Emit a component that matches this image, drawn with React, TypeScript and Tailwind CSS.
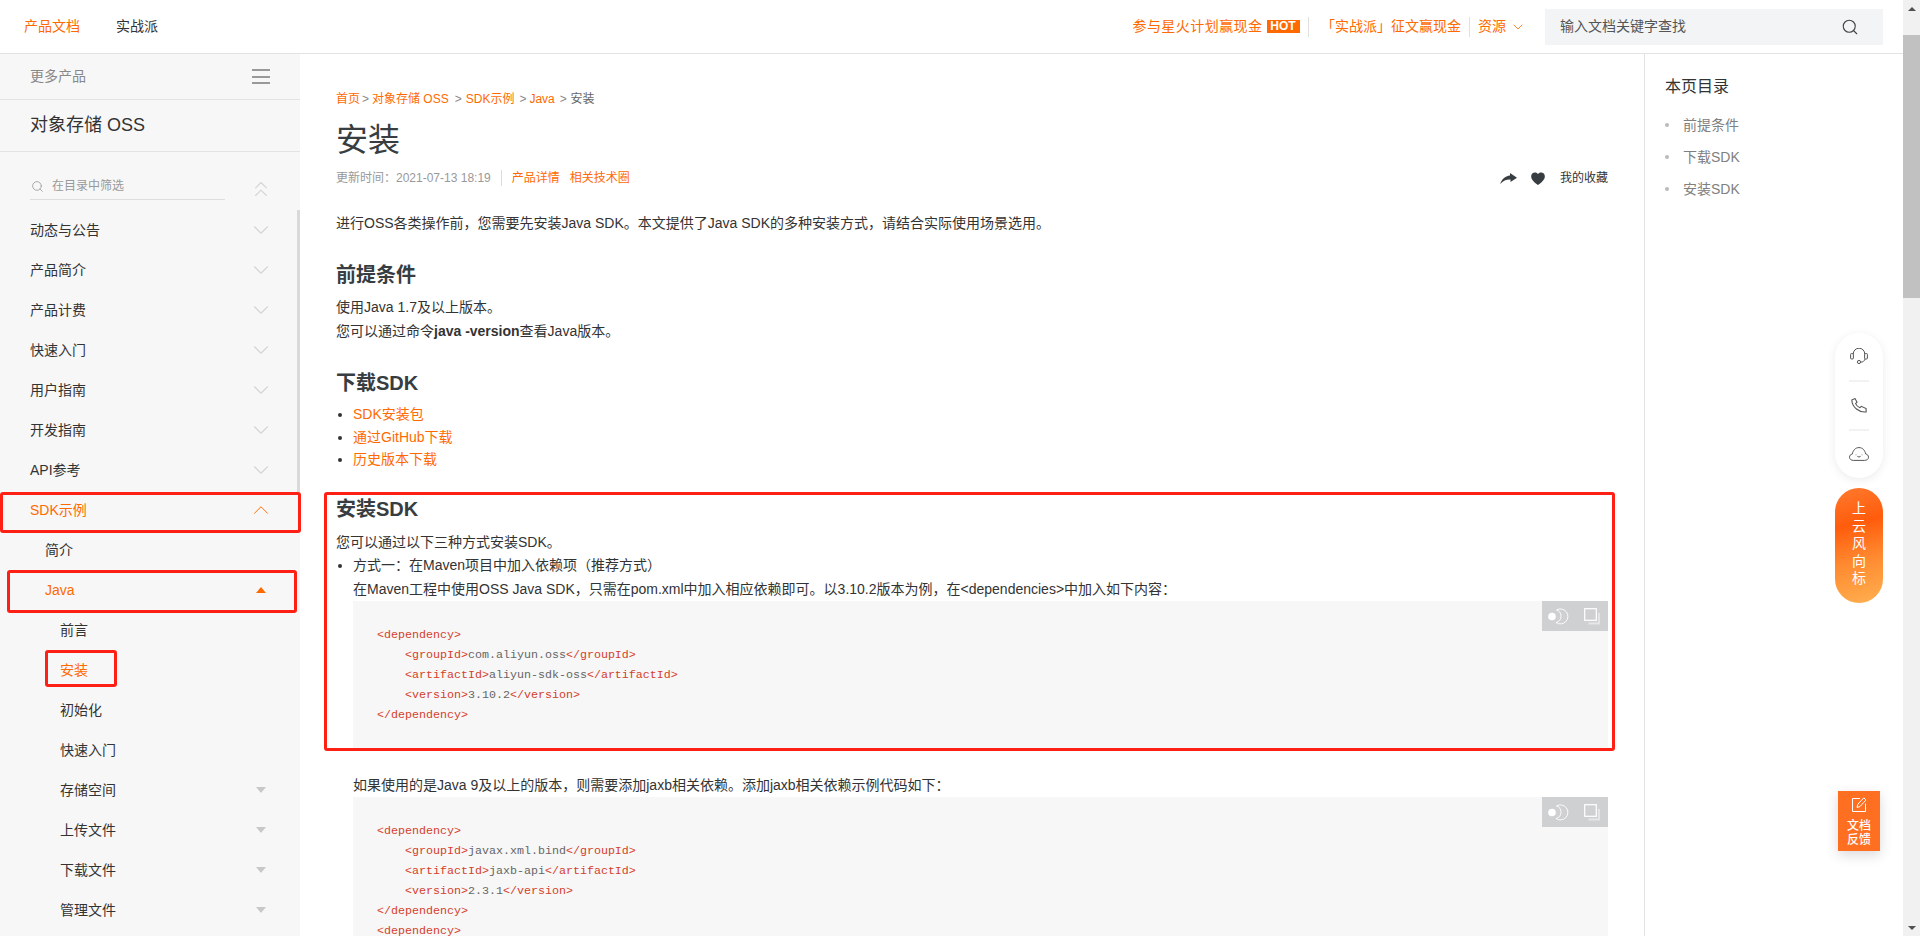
import { ChevronDown, ChevronUp, ChevronsUp, Search } from 'lucide-react';

const sideFont = { fontFamily: '"Liberation Sans", "Noto Sans CJK SC", sans-serif' };

type MenuItem = {
  label: string;
  level: 1 | 2 | 3;
  icon?: 'down' | 'up' | 'caret' | 'caretUp';
  active?: boolean;
};

const menu: MenuItem[] = [
  { label: '动态与公告', level: 1, icon: 'down' },
  { label: '产品简介', level: 1, icon: 'down' },
  { label: '产品计费', level: 1, icon: 'down' },
  { label: '快速入门', level: 1, icon: 'down' },
  { label: '用户指南', level: 1, icon: 'down' },
  { label: '开发指南', level: 1, icon: 'down' },
  { label: 'API参考', level: 1, icon: 'down' },
  { label: 'SDK示例', level: 1, icon: 'up', active: true },
  { label: '简介', level: 2 },
  { label: 'Java', level: 2, icon: 'caretUp', active: true },
  { label: '前言', level: 3 },
  { label: '安装', level: 3, active: true },
  { label: '初始化', level: 3 },
  { label: '快速入门', level: 3 },
  { label: '存储空间', level: 3, icon: 'caret' },
  { label: '上传文件', level: 3, icon: 'caret' },
  { label: '下载文件', level: 3, icon: 'caret' },
  { label: '管理文件', level: 3, icon: 'caret' },
];

function MenuIcon({ icon }: { icon: MenuItem['icon'] }) {
  if (icon === 'down') return <ChevronDown size={26} strokeWidth={1} className="shrink-0 text-[#d4d4d4]" />;
  if (icon === 'up') return <ChevronUp size={26} strokeWidth={0.9} className="shrink-0 text-[#ff6a00]" />;
  if (icon === 'caret') {
    return <div className="w-0 h-0 border-x-[5.5px] border-x-transparent border-t-[6px] border-t-[#c8c8c8]" />;
  }
  if (icon === 'caretUp') {
    return <div className="w-0 h-0 border-x-[5.5px] border-x-transparent border-b-[6px] border-b-[#ff6a00]" />;
  }
  return null;
}

function Sidebar() {
  return (
    <aside className="relative w-[300px] h-full bg-[#f7f7f7] overflow-hidden shrink-0">
      <div className="h-[46px] pl-[30px] pr-[30px] flex items-center justify-between border-b border-[#e3e3e3] text-[14px] text-[#888]">
        <span>更多产品</span>
        <div className="w-[18px] h-[15px] flex flex-col justify-between">
          <div className="h-[2px] bg-[#999]" />
          <div className="h-[2px] bg-[#999]" />
          <div className="h-[2px] bg-[#999]" />
        </div>
      </div>
      <div className="h-[52px] pl-[30px] flex items-center border-b border-[#e3e3e3] text-[18px] text-[#333]">
        对象存储 OSS
      </div>
      <div className="h-[58px] pl-[30px] pt-[19px] flex items-start">
        <div className="w-[195px] h-[29px] pt-[2px] flex items-center gap-2 border-b border-[#dedede] text-[12px] text-[#999]">
          <Search size={13} strokeWidth={1.5} className="ml-[1px] text-[#999]" />
          <span>在目录中筛选</span>
        </div>
        <ChevronsUp size={26} strokeWidth={1} className="ml-[23px] mt-[5px] text-[#d4d4d4]" />
      </div>
      {menu.map((item, i) => (
        <div
          key={i}
          className={`h-10 flex items-center justify-between pr-[30px] text-[14px] ${
            item.level === 1 ? 'pl-[30px]' : item.level === 2 ? 'pl-[45px]' : 'pl-[60px]'
          } ${item.active ? 'text-[#ff6a00]' : 'text-[#333]'}`}
        >
          <span>{item.label}</span>
          <span className="w-[18px] flex justify-center">
            <MenuIcon icon={item.icon} />
          </span>
        </div>
      ))}
      {/* sidebar scrollbar thumb */}
      <div className="absolute right-0 top-[156px] w-[3px] h-[282px] bg-[#d9d9d9]" />
    </aside>
  );
}

function CodeTools() {
  return (
    <div className="absolute right-0 top-0 w-[66px] h-[30px] bg-[#cfd0d2] flex items-center">
      <svg width="22" height="18" viewBox="0 0 22 18" fill="none" className="ml-[5px]">
        <circle cx="5" cy="9.500" r="3.800" fill="#fff" />
        <path d="M9.500 3A7.500 7.500 0 1 1 9 15.500A6.500 6.500 0 0 0 9.500 3Z" stroke="#fff" strokeWidth="0.9" />
      </svg>
      <svg width="17" height="17" viewBox="0 0 17 17" fill="none" className="ml-[15px]">
        <rect x="0.700" y="0.700" width="11.600" height="11.600" stroke="#fff" strokeWidth="1.200" />
        <path d="M15 5v10.500H4.500" stroke="#e6e6e8" strokeWidth="1.800" />
      </svg>
    </div>
  );
}

type CodeLine = { indent?: boolean; open: string; value?: string; close?: string };

function CodeBlock({ lines, cut }: { lines: CodeLine[]; cut?: boolean }) {
  return (
    <div className={`relative bg-[#f7f7f7] pl-6 pt-6 ${cut ? '' : 'pb-6'}`}>
      <CodeTools />
      <div className="text-[11.66px] leading-5 text-[#666] whitespace-pre" style={{ fontFamily: '"Liberation Mono", monospace' }}>
        {lines.map((l, i) => (
          <div key={i} className={l.indent ? 'pl-7' : ''}>
            <span className="text-[#d5402b]">{l.open}</span>
            {l.value}
            {l.close && <span className="text-[#d5402b]">{l.close}</span>}
          </div>
        ))}
      </div>
    </div>
  );
}

function Article() {
  return (
    <main className="relative flex-1 min-w-0 h-full overflow-hidden pl-9 pr-9 text-[#333] text-[14px]">
      <div className="mt-[35px] h-5 flex items-center text-[12px] text-[#ff6a00]">
        <span>首页</span>
        <span className="text-[#888] ml-[2px] mr-[3px]">&gt;</span>
        <span>对象存储 OSS</span>
        <span className="text-[#888] ml-[6px] mr-1">&gt;</span>
        <span>SDK示例</span>
        <span className="text-[#888] ml-[5px] mr-[3px]">&gt;</span>
        <span>Java</span>
        <span className="text-[#888] ml-[5px] mr-[3.6px]">&gt;</span>
        <span className="text-[#666]">安装</span>
      </div>
      <h1 className="mt-[9px] h-11 text-[32px] leading-[44px] text-[#373d41]">安装</h1>
      <div className="relative mt-[6px] h-5 flex items-center text-[12px] text-[#999]">
        <span>更新时间：2021-07-13 18:19</span>
        <div className="w-px h-4 bg-[#dcdcdc] ml-[10px] mr-[10px]" />
        <span className="text-[#ff6a00]">产品详情</span>
        <span className="text-[#ff6a00] ml-[10px]">相关技术圈</span>
        <div className="ml-auto flex items-center text-[#333]">
          <svg width="17" height="11" viewBox="0 0 17 11" fill="#373d41" className="mt-[1px]">
            <path d="M10 0 17 4.700 10.500 9V6.600C6.500 6.300 3.500 7.800.2 11 1.500 6.500 5 2.900 10 2.400Z" />
          </svg>
          <svg width="14" height="13" viewBox="0 0 14 13" fill="#373d41" className="ml-[14px]">
            <path d="M7 13C3 10 .2 7.500.2 4.400A3.800 3.800 0 0 1 4 .4C5.300.4 6.400 1 7 2 7.600 1 8.700.4 10 .4A3.800 3.800 0 0 1 13.800 4.400C13.800 7.500 11 10 7 13Z" />
          </svg>
          <span className="ml-[15px]">我的收藏</span>
        </div>
      </div>
      <p className="mt-[23px] leading-6">进行OSS各类操作前，您需要先安装Java SDK。本文提供了Java SDK的多种安装方式，请结合实际使用场景选用。</p>

      <h2 className="mt-[26px] h-7 text-[20px] leading-7 font-bold text-[#373d41]">前提条件</h2>
      <p className="mt-[6px] leading-6">使用Java 1.7及以上版本。</p>
      <p className="leading-6">您可以通过命令<b>java -version</b>查看Java版本。</p>

      <h2 className="mt-[26px] h-7 text-[20px] leading-7 font-bold text-[#373d41]">下载SDK</h2>
      <ul className="mt-[6px] ml-[17px] list-disc text-[#ff6a00] leading-[22.5px] marker:text-[#333]">
        <li>SDK安装包</li>
        <li>通过GitHub下载</li>
        <li>历史版本下载</li>
      </ul>

      <h2 className="mt-[24.5px] h-7 text-[20px] leading-7 font-bold text-[#373d41]">安装SDK</h2>
      <p className="mt-2 leading-[22px]">您可以通过以下三种方式安装SDK。</p>
      <ul className="ml-[17px] list-disc leading-6 marker:text-[#333]">
        <li>
          方式一：在Maven项目中加入依赖项（推荐方式）
          <p>在Maven工程中使用OSS Java SDK，只需在pom.xml中加入相应依赖即可。以3.10.2版本为例，在&lt;dependencies&gt;中加入如下内容：</p>
          <CodeBlock
            lines={[
              { open: '<dependency>' },
              { indent: true, open: '<groupId>', value: 'com.aliyun.oss', close: '</groupId>' },
              { indent: true, open: '<artifactId>', value: 'aliyun-sdk-oss', close: '</artifactId>' },
              { indent: true, open: '<version>', value: '3.10.2', close: '</version>' },
              { open: '</dependency>' },
            ]}
          />
          <p className="mt-6">如果使用的是Java 9及以上的版本，则需要添加jaxb相关依赖。添加jaxb相关依赖示例代码如下：</p>
          <CodeBlock
            cut
            lines={[
              { open: '<dependency>' },
              { indent: true, open: '<groupId>', value: 'javax.xml.bind', close: '</groupId>' },
              { indent: true, open: '<artifactId>', value: 'jaxb-api', close: '</artifactId>' },
              { indent: true, open: '<version>', value: '2.3.1', close: '</version>' },
              { open: '</dependency>' },
              { open: '<dependency>' },
            ]}
          />
        </li>
      </ul>
    </main>
  );
}

function Toc() {
  return (
    <aside className="w-[259px] h-full border-l border-[#e3e3e3] pl-5 pt-[21px] shrink-0">
      <div className="text-[16px] leading-6 text-[#333]">本页目录</div>
      <div className="mt-[10px] flex flex-col text-[14px] text-[#808080]">
        {['前提条件', '下载SDK', '安装SDK'].map((t) => (
          <div key={t} className="h-8 flex items-center">
            <div className="w-1 h-1 rounded-full bg-[#bbb]" />
            <span className="ml-[14px]">{t}</span>
          </div>
        ))}
      </div>
    </aside>
  );
}

function Header() {
  return (
    <header className="h-[54px] shrink-0 flex items-center border-b border-[#e3e3e3] bg-white text-[14px]">
      <span className="ml-6 text-[#ff6a00]">产品文档</span>
      <span className="ml-9 text-[#333]">实战派</span>
      <div className="ml-auto flex items-center text-[#ff6a00]">
        <span className="tracking-[0.45px]">参与星火计划赢现金</span>
        <span className="ml-1 w-[33px] h-[13px] bg-[#ff6a00] text-white text-[12px] leading-[13px] text-center font-bold">HOT</span>
        <div className="w-px h-5 bg-[#e0e0e0] ml-2" />
        <span className="ml-[12.5px]">「实战派」征文赢现金</span>
        <div className="w-px h-5 bg-[#e0e0e0] ml-2" />
        <span className="ml-2">资源</span>
        <ChevronDown size={16} strokeWidth={1.2} className="ml-[4px]" />
      </div>
      <div className="ml-[19px] mr-5 w-[338px] h-9 bg-[#f2f4f6] flex items-center justify-between pl-[15px] pr-6 text-[#555]">
        <span>输入文档关键字查找</span>
        <Search size={18} strokeWidth={1.5} className="text-[#444]" />
      </div>
    </header>
  );
}

function PageScrollbar() {
  return (
    <div className="w-[17px] h-full shrink-0 bg-[#f1f1f1] flex flex-col">
      <div className="h-[17px] flex items-center justify-center">
        <div className="w-0 h-0 border-x-[4px] border-x-transparent border-b-[4px] border-b-[#505050]" />
      </div>
      <div className="mt-[18px] h-[263px] bg-[#c1c1c1]" />
      <div className="mt-auto h-[17px] flex items-center justify-center">
        <div className="w-0 h-0 border-x-[4px] border-x-transparent border-t-[4px] border-t-[#505050]" />
      </div>
    </div>
  );
}

function FloatWidgets() {
  return (
    <>
      <div className="absolute left-[1835px] top-[333px] w-12 h-[145px] rounded-3xl bg-white shadow-[0_2px_10px_rgba(0,0,0,0.08)] flex flex-col items-center">
        <svg width="18" height="16" viewBox="0 0 18 16" fill="none" stroke="#555" strokeWidth="1" className="mt-[15px]">
          <path d="M3.200 6.500V6a5.800 5.800 0 0 1 11.600 0v.5" />
          <rect x="0.600" y="5.500" width="2.800" height="5.500" rx="1" />
          <rect x="14.600" y="5.500" width="2.800" height="5.500" rx="1" />
          <path d="M15 11c-.5 2-1.800 3-4.300 3.200" />
          <circle cx="9" cy="14" r="1.600" />
        </svg>
        <div className="w-5 h-[2px] bg-[#f2f2f2] mt-[16px]" />
        <svg width="16" height="15" viewBox="0 0 16 15" fill="none" stroke="#555" strokeWidth="1.100" className="mt-[16px]">
          <path d="M.8 2 4 .6l2 3.600-1.400 1.400c.8 1.900 2.300 3.300 4.300 4.100l1.400-1.400 4.800 2.200v3.400C8 14.600 1.200 9.500.8 2Z" />
        </svg>
        <div className="w-5 h-[2px] bg-[#f2f2f2] mt-[16px]" />
        <svg width="20" height="14" viewBox="0 0 20 14" fill="none" stroke="#555" strokeWidth="1" className="mt-[16px]">
          <path d="M4.500 13.400h11c2.300 0 4-1.200 4-3.200 0-1.600-1-2.800-2.800-3.200C15.800 3 13.500.6 10 .6 6.500.6 4.200 3 3.300 7 1.500 7.400.5 8.600.5 10.200c0 2 1.700 3.200 4 3.200Z" />
          <path d="M7 7.600v.6M13 7.600v.6" />
          <path d="M8.400 9.300c.6.800 2.600.8 3.200 0" />
        </svg>
      </div>
      <div className="absolute left-[1835px] top-[488px] w-12 h-[115px] rounded-3xl bg-[linear-gradient(165deg,#ff7a2e_0%,#ff5c0c_32%,#ff8a30_62%,#ffb050_100%)] flex flex-col items-center pt-[12px] text-white text-[14px] leading-[17.5px]">
        {['上', '云', '风', '向', '标'].map((c) => (
          <span key={c}>{c}</span>
        ))}
      </div>
      <div className="absolute left-[1838px] top-[791px] w-[42px] h-[60px] bg-[#ff6f22] shadow-[0_4px_12px_rgba(0,0,0,0.15)] flex flex-col items-center text-white text-[12px] font-medium leading-[14px]">
        <svg width="16" height="16" viewBox="0 0 16 16" fill="none" stroke="#fff" strokeWidth="1" className="mt-[6px] mb-[6px]">
          <path d="M9 1.500H1.500v13h13V6.500" />
          <path d="M12.800.8 15 3l-6 6.500-3 1 .8-3.200Z" />
        </svg>
        <span>文档</span>
        <span>反馈</span>
      </div>
    </>
  );
}

function Marks() {
  // red annotation boxes drawn on top of the page
  const box = 'absolute border-[3px] border-[#ff2015] rounded-[3px] pointer-events-none';
  return (
    <>
      <div className={`${box} left-0 top-[492px] w-[301px] h-[41px]`} />
      <div className={`${box} left-[7px] top-[570px] w-[290px] h-[43px]`} />
      <div className={`${box} left-[45px] top-[650px] w-[72px] h-[37px]`} />
      <div className={`${box} left-[324px] top-[492px] w-[1291px] h-[259px]`} />
    </>
  );
}

export default function App() {
  return (
    <div className="relative w-[1920px] h-[936px] overflow-hidden flex bg-white" style={sideFont}>
      <div className="flex-1 min-w-0 h-full flex flex-col">
        <Header />
        <div className="flex-1 min-h-0 flex">
          <Sidebar />
          <Article />
          <Toc />
        </div>
      </div>
      <PageScrollbar />
      <FloatWidgets />
      <Marks />
    </div>
  );
}
